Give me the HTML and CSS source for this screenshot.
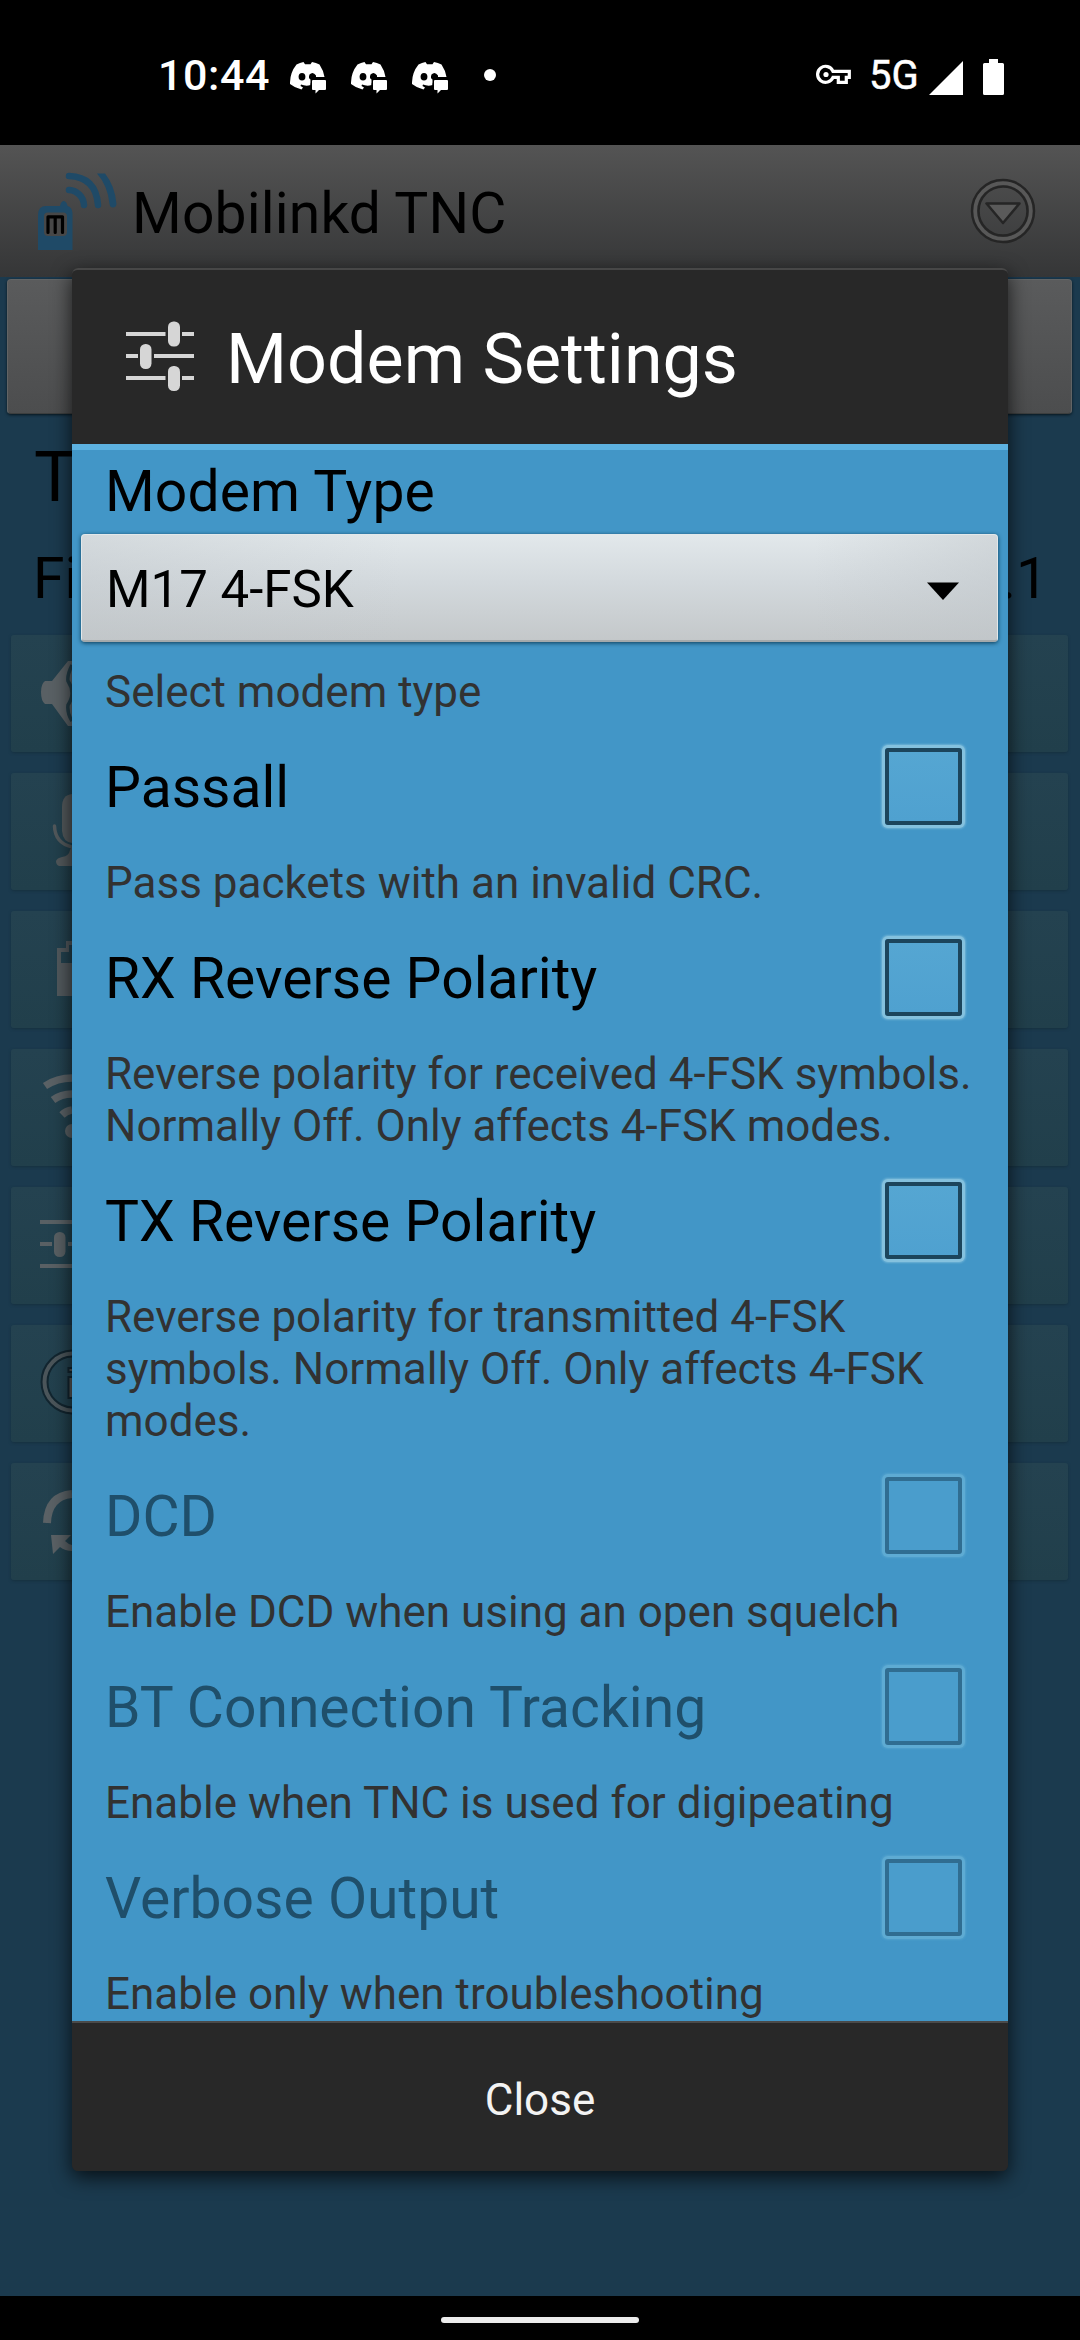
FILE: index.html
```html
<!DOCTYPE html>
<html lang="en">
<head>
<meta charset="utf-8">
<title>Mobilinkd TNC</title>
<link rel="stylesheet" href="styles.css">
</head>
<body>
<svg class="defs" aria-hidden="true">
  <symbol id="chat" viewBox="0 0 36 32">
    <path fill="#fff" d="M6.500 2.500Q10 .5 13.500 0L15 2.300H20.500L22 0Q26 .5 29.500 2.500Q33.500 8.500 34.500 15H22.500V18Q20 21 20.500 23Q16 24.500 11 22.500L10.500 24L13 25.500L11.500 27.500Q5 26 0 22Q-.3 11 6.500 2.500Z"/>
    <ellipse cx="12" cy="14.700" rx="3.400" ry="3.800" fill="#000"/>
    <path d="M20.500 23V17.500Q18 16.500 19.500 12.500Q23 9 26 13.500V15H36V18" fill="#000"/>
    <path fill="#fff" d="M23 18H35Q36 18 36 19V27Q36 28 35 28H29L25.500 31.500V28H23Q22 28 22 27V19Q22 18 23 18Z"/>
  </symbol>
  <symbol id="sliders" viewBox="0 0 68 72">
    <g fill="currentColor">
      <rect y="11" width="39.500" height="4"/><rect x="56" y="11" width="12" height="4"/>
      <rect y="33" width="12" height="4"/><rect x="28" y="33" width="40" height="4"/>
      <rect y="55" width="39.500" height="4"/><rect x="56" y="55" width="12" height="4"/>
      <rect x="42" y="0.500" width="12" height="25" rx="5.500"/>
      <rect x="14" y="23" width="11.500" height="25" rx="5.500"/>
      <rect x="42" y="45" width="12" height="25" rx="5.500"/>
    </g>
  </symbol>
</svg>
<div class="screen">
  <header class="status">
    <div class="status-left">
      <span class="clock">10:44</span>
      <svg class="chat"><use href="#chat"/></svg>
      <svg class="chat"><use href="#chat"/></svg>
      <svg class="chat"><use href="#chat"/></svg>
      <i class="dot"></i>
    </div>
    <div class="status-right">
      <svg class="key" viewBox="0 0 36 22" fill="none" stroke="#fff" stroke-width="3.200"><path d="M17 7.300H33.300V13.300H30.300V18.300H22.300V13.300H17A8 8 0 1 1 17 7.300Z"/><circle cx="10" cy="10.500" r="2.600" fill="#fff" stroke="none"/></svg>
      <span class="net">5G</span>
      <svg class="signal" viewBox="0 0 34 34"><path fill="#fff" d="M34 0V34H0Z"/></svg>
      <svg class="battery" viewBox="0 0 21 36"><path fill="#fff" d="M6 0H15V4H19.500Q21 4 21 5.500V34.500Q21 36 19.500 36H1.500Q0 36 0 34.500V5.500Q0 4 1.500 4H6Z"/></svg>
    </div>
  </header>

  <div class="appbar">
    <svg class="logo" viewBox="0 0 80 80">
      <g fill="none" stroke="#1f4a67" stroke-width="6.500" stroke-linecap="round">
        <path d="M31 18A16 16 0 0 1 46 33"/><path d="M31 4Q58 5 60 33"/>
      </g>
      <path fill="#1f4a67" d="M59 1.500H67Q77 14 78.500 32Q78 35.500 75 35.500Q72 35.500 71.500 32Q70 14 59 1.500Z"/>
      <path fill="#1f4a67" d="M0 78V43Q0 34 8 34H22Q23 29 26 29Q29 30 29.500 34Q34 35 34.500 41V78Z"/>
      <rect x="6" y="40.500" width="23" height="23.500" rx="4" fill="#474747"/>
      <path d="M10 60.500V44.800H24.500V60.500M17.200 44.800V60.500" fill="none" stroke="#000" stroke-width="3.200" stroke-linecap="round" stroke-linejoin="round"/>
    </svg>
    <h1>Mobilinkd TNC</h1>
    <svg class="more" viewBox="0 0 66 66">
      <circle cx="33" cy="33" r="28.500" fill="none" stroke="#585858" stroke-width="5"/>
      <circle cx="33" cy="33" r="31" fill="none" stroke="#252525" stroke-width="2.500"/>
      <circle cx="33" cy="33" r="24.500" fill="none" stroke="#252525" stroke-width="2.500"/>
      <path d="M16.500 25.500H49.500L33 45Z" fill="#5a5a5a" stroke="#252525" stroke-width="2.500" stroke-linejoin="round"/>
    </svg>
  </div>

  <main class="page">
    <div class="big-button"></div>
    <div class="line-large">T</div>
    <div class="line-medium"><span>Fi</span><span>.1</span></div>
    <div class="cards">
      <div class="card"><svg viewBox="0 0 61 117"><path fill="#596064" d="M34 46H41L57 26H61V91H57L41 69H34Q30 66 30 57Q30 49 34 46Z"/><path fill="none" stroke="#233c46" stroke-width="3.500" d="M61 30Q56 40 57 46Q61 52 61 58Q61 64 57 70Q56 78 61 86"/></svg></div>
      <div class="card"><svg viewBox="0 0 61 117"><path fill="#52585b" d="M61 21Q51 22 51 34V58Q52 69 61 70Z"/><path d="M43.500 53Q44 70 61 74" fill="none" stroke="#52585b" stroke-width="3.500" stroke-linecap="round"/><path fill="#52585b" d="M61 74V93H48Q45 92 45 88Q46 85 51 84Q58 83 59 77Z"/></svg></div>
      <div class="card"><svg viewBox="0 0 61 117"><path fill="#52595d" fill-rule="evenodd" d="M61 30H55V37H46V85H61V52H50V41H58V34H61Z"/></svg></div>
      <div class="card"><svg viewBox="0 0 61 117" fill="none" stroke="#5a6165" stroke-width="7.500"><path d="M34 37Q46 29 61 29"/><path d="M42 51Q50 45 61 45"/><path d="M51 66Q55 62 61 61"/><circle cx="61" cy="82" r="7" fill="#5a6165" stroke="none"/></svg></div>
      <div class="card"><svg class="card-sliders"><use href="#sliders"/></svg></div>
      <div class="card"><svg viewBox="0 0 61 117" fill="none"><circle cx="62" cy="57" r="28.500" stroke="#12252f" stroke-width="8"/><circle cx="62" cy="57" r="28.500" stroke="#4b555a" stroke-width="4"/><path d="M61 43H57.500V47H61M61 52H57.500V73H61" fill="#555" stroke="#12252f" stroke-width="2"/></svg></div>
      <div class="card"><svg viewBox="0 0 61 117"><path d="M36 60Q37 33 61 31" fill="none" stroke="#5a6165" stroke-width="8"/><path fill="#5a6165" d="M40 72H60L54 78Q57 81 61 82V88Q54 88 49 84L42 91Z"/></svg></div>
    </div>
  </main>

  <footer class="nav"><i class="handle"></i></footer>

  <section class="dialog">
    <div class="dialog-head">
      <svg class="head-icon"><use href="#sliders"/></svg>
      <h2>Modem Settings</h2>
    </div>
    <div class="dialog-body">
      <label class="field-title">Modem Type</label>
      <div class="spinner"><span>M17 4-FSK</span><svg viewBox="0 0 34 18"><path d="M1 .5H33L17 18Z"/></svg></div>
      <p class="summary">Select modem type</p>
      <div class="item"><div class="item-row"><span>Passall</span><i class="check"></i></div><p class="summary">Pass packets with an invalid CRC.</p></div>
      <div class="item"><div class="item-row"><span>RX Reverse Polarity</span><i class="check"></i></div><p class="summary">Reverse polarity for received 4-FSK symbols.<br>Normally Off. Only affects 4-FSK modes.</p></div>
      <div class="item"><div class="item-row"><span>TX Reverse Polarity</span><i class="check"></i></div><p class="summary">Reverse polarity for transmitted 4-FSK<br>symbols. Normally Off. Only affects 4-FSK<br>modes.</p></div>
      <div class="item disabled"><div class="item-row"><span>DCD</span><i class="check"></i></div><p class="summary">Enable DCD when using an open squelch</p></div>
      <div class="item disabled"><div class="item-row"><span>BT Connection Tracking</span><i class="check"></i></div><p class="summary">Enable when TNC is used for digipeating</p></div>
      <div class="item disabled"><div class="item-row"><span>Verbose Output</span><i class="check"></i></div><p class="summary">Enable only when troubleshooting</p></div>
    </div>
    <button class="close">Close</button>
  </section>
</div>
</body>
</html>
```
FILE: styles.css
```css
* { box-sizing: border-box; }
body, h1, h2, p { margin: 0; font-weight: 400; }
body { background: #000; font-family: Roboto, "Liberation Sans", sans-serif; }
svg { display: block; flex: none; }
.defs { position: absolute; width: 0; height: 0; }
.screen {
  position: relative;
  display: flex;
  flex-direction: column;
  width: 1080px;
  height: 2340px;
  overflow: hidden;
}

/* status bar */
.status {
  display: flex;
  justify-content: space-between;
  height: 145px;
  padding: 5px 76px 0 158px;
  color: #fff;
  font-weight: 500;
}
.status-left, .status-right { display: flex; align-items: center; }
.clock { width: 132px; font-size: 43px; letter-spacing: 0.6px; }
.chat { width: 36px; height: 32px; margin: 6px 25px 0 0; }
.dot { width: 12px; height: 12px; margin-left: 11px; border-radius: 50%; background: #fff; }
.key { width: 36px; height: 22px; }
.net { margin-left: 17px; width: 60px; font-size: 40px; font-weight: 400; -webkit-text-stroke: 0.5px #fff; }
.signal { width: 34px; height: 34px; margin: 6px 20px 0 0; }
.battery { width: 21px; height: 36px; margin-top: 4px; }

/* app bar */
.appbar {
  display: flex;
  align-items: center;
  height: 132px;
  padding: 0 44px 0 38px;
  background: linear-gradient(#545454, #353637);
}
.logo { width: 80px; height: 80px; margin-top: 1px; }
.appbar h1 { flex: 1; margin: 5px 0 0 14px; color: #000; font-size: 57px; letter-spacing: 0.15px; }
.more { width: 66px; height: 66px; }

/* page behind the dialog */
.page { flex: 1; padding: 2px 8px 0 7px; background: #1b3a4e; }
.big-button {
  height: 135px;
  border: 1px solid #626465;
  border-bottom-color: #3c3e3e;
  border-radius: 4px;
  background: linear-gradient(#5a5b5c, #4c4d4e);
  box-shadow: 0 1px 3px #07151d;
}
.line-large { height: 126px; padding-left: 27px; color: #000; font-size: 70px; line-height: 126px; }
.line-medium { display: flex; justify-content: space-between; height: 95px; padding: 0 24px 0 26px; color: #000; font-size: 57px; line-height: 78px; }
.cards { display: grid; gap: 21px; padding: 0 4px; }
.card {
  height: 117px;
  border-radius: 3px;
  background: linear-gradient(#244250, #213f4b);
  box-shadow: 0 1px 3px #16303f;
}
.card svg { width: 61px; height: 117px; }
.card .card-sliders { width: 68px; height: 72px; margin-left: 29px; transform: translateY(22px); color: #596064; }

/* gesture bar */
.nav { display: flex; justify-content: center; height: 44px; padding-top: 21px; background: #000; }
.handle { width: 198px; height: 6px; border-radius: 3px; background: #ececec; }

/* dialog */
.dialog {
  position: absolute;
  left: 72px;
  top: 268px;
  width: 936px;
  height: 1903px;
  border-radius: 6px;
  background: #282828;
  box-shadow: 0 6px 20px rgba(0, 0, 0, .75);
}
.dialog-head {
  display: flex;
  align-items: center;
  height: 182px;
  padding-left: 54px;
  border-top: 2px solid #474747;
  border-bottom: 6px solid #5db1e0;
  border-radius: 6px 6px 0 0;
}
.head-icon { width: 68px; height: 72px; color: #d6d6d6; }
.dialog-head h2 { margin: 4px 0 0 32px; color: #fff; font-size: 70px; line-height: 82px; }
.dialog-body { height: 1571px; overflow: hidden; background: #4296c7; color: #000; }
.field-title { display: block; padding-left: 33px; font-size: 57px; line-height: 83px; letter-spacing: 0.1px; }
.spinner {
  display: flex;
  align-items: center;
  justify-content: space-between;
  height: 108px;
  margin: 1px 10px 24px 9px;
  padding: 3px 37px 0 24px;
  border: 1px solid #e3e8ea;
  border-bottom: 2px solid #a4a9ab;
  border-radius: 4px;
  background:
    linear-gradient(90deg, rgba(190, 196, 200, .4), transparent 35%, transparent 80%, rgba(190, 196, 200, .45)),
    linear-gradient(#e2e8eb, #d3d9dd 45%, #c4c8ca);
  box-shadow: 0 1px 4px #0c3b55;
  font-size: 51px;
}
.spinner svg { width: 34px; height: 18px; margin-top: 3px; }
.summary { padding-left: 33px; color: #323232; font-size: 44px; line-height: 52px; white-space: nowrap; }
.item-row {
  display: flex;
  align-items: center;
  justify-content: space-between;
  height: 139px;
  padding: 0 46px 0 33px;
  font-size: 57px;
}
.check {
  width: 77px;
  height: 77px;
  border: 4px solid #1c455c;
  border-radius: 3px;
  background: linear-gradient(#55a6d2, #4fa1d0);
  box-shadow: 0 0 0 3px #84c1de, 0 0 2px 4px #6db2d6;
  transform: translateY(-1px);
}
.disabled .item-row { color: #1f4f6b; }
.disabled .check { border-color: #306d91; background: #4a9dcc; box-shadow: 0 0 0 3px #5eabd3, 0 0 2px 4px #52a2ce; }
.close {
  display: block;
  width: 100%;
  height: 150px;
  padding: 6px 0 0;
  border: 0;
  border-top: 2px solid #4a4a4a;
  border-radius: 0 0 6px 6px;
  background: #282828;
  color: #f3f3f3;
  font: 400 44px Roboto, "Liberation Sans", sans-serif;
}
```
